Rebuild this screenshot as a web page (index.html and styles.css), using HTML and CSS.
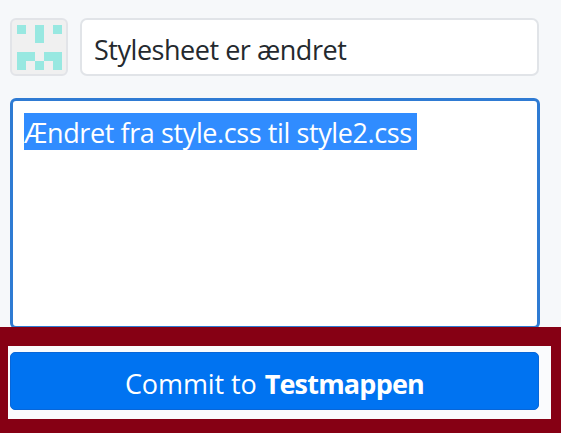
FILE: index.html
```html
<!DOCTYPE html>
<html lang="da">
<head>
<meta charset="utf-8">
<title>Commit</title>
<link rel="stylesheet" href="styles.css">
</head>
<body>
<main class="panel">
  <div class="summary-row">
    <div class="avatar">
      <svg viewBox="0 0 5 5" width="45" height="45" shape-rendering="crispEdges" aria-hidden="true">
        <path fill="#98e8e1" d="M0 0h1v1H0zM2 0h1v2H2zM4 0h1v1H4zM0 3h2v1H1v1H0zM3 3h2v2H4V4H3zM2 4h1v1H2z"/>
      </svg>
    </div>
    <div class="summary"><span class="summary-text">Stylesheet er ændret</span></div>
  </div>
  <div class="description"><span class="selection">Ændret fra style.css til style2.css</span></div>
  <div class="highlight">
    <div class="action-area">
      <button class="commit" type="button"><span class="commit-label">Commit to</span><strong class="branch">Testmappen</strong></button>
    </div>
  </div>
</main>
</body>
</html>
```
FILE: styles.css
```css
* { box-sizing: border-box; }
body {
  margin: 0;
  background: #f6f8fa;
  font-family: "Open Sans", "Noto Sans", sans-serif;
  font-size: 27px;
  color: #24292e;
}
.panel {
  display: flex;
  flex-direction: column;
  height: 433px;
  padding-top: 18px;
  overflow: hidden;
}
.summary-row {
  display: flex;
  gap: 12px;
  height: 58px;
  margin: 0 22px 22px 10px;
}
.avatar {
  display: grid;
  place-items: center;
  width: 58px;
  border: 2px solid #e2e4e8;
  border-radius: 6px;
  background: #f0f0f0;
}
.summary {
  flex: 1;
  display: flex;
  align-items: center;
  padding: 4px 0 0 12px;
  border: 2px solid #e1e4e8;
  border-radius: 7px;
  background: #fff;
  white-space: nowrap;
}
.summary-text { letter-spacing: -0.47px; }
.description {
  flex: none;
  height: 231px;
  margin: 0 21px 0 10px;
  padding: 12px 11px;
  border: 3px solid #2f7bd3;
  border-radius: 6px;
  background: #fff;
}
.selection {
  display: block;
  width: 393px;
  height: 37px;
  line-height: 39px;
  background: #308cff;
  color: #fff;
  white-space: nowrap;
  letter-spacing: -0.4px;
}
.highlight {
  flex: 1;
  margin-top: -2px;
  padding: 19px 10px 14px 8px;
  background: #860014;
  z-index: 1;
}
.action-area {
  height: 73px;
  padding: 6px 12px 9px 2px;
  background: #fafbfd;
}
.commit {
  display: flex;
  align-items: center;
  justify-content: center;
  gap: 8px;
  width: 100%;
  height: 58px;
  padding: 5px 0 0;
  border: 1px solid #0866d8;
  border-radius: 5px;
  background: #0073f1;
  color: #fff;
  font: inherit;
  white-space: nowrap;
}
.commit-label { letter-spacing: -0.1px; }
.branch { font-weight: 700; letter-spacing: -0.8px; }
```
